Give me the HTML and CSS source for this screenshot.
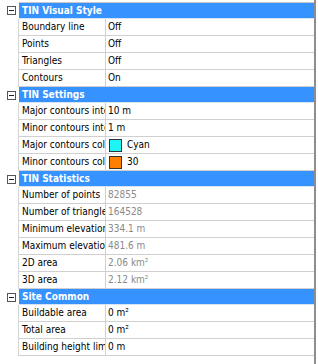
FILE: index.html
```html
<!DOCTYPE html>
<html lang="en">
<head>
  <meta charset="UTF-8">
  <title>TIN Properties</title>
  <link rel="stylesheet" href="styles.css">
</head>
<body>

<div class="panel">
  <div class="cat">
    <div class="gutter"><span class="toggle"></span></div>
    <div class="cat-title">TIN Visual Style</div>
  </div>
  <div class="row"><div class="gutter"></div><div class="name">Boundary line</div><div class="val">Off</div></div>
  <div class="row"><div class="gutter"></div><div class="name">Points</div><div class="val">Off</div></div>
  <div class="row"><div class="gutter"></div><div class="name">Triangles</div><div class="val">Off</div></div>
  <div class="row"><div class="gutter"></div><div class="name">Contours</div><div class="val">On</div></div>

  <div class="cat">
    <div class="gutter"><span class="toggle"></span></div>
    <div class="cat-title">TIN Settings</div>
  </div>
  <div class="row"><div class="gutter"></div><div class="name">Major contours interval</div><div class="val">10 m</div></div>
  <div class="row"><div class="gutter"></div><div class="name">Minor contours interval</div><div class="val">1 m</div></div>
  <div class="row"><div class="gutter"></div><div class="name">Major contours color</div><div class="val"><span class="swatch cyan"></span>Cyan</div></div>
  <div class="row"><div class="gutter"></div><div class="name">Minor contours color</div><div class="val"><span class="swatch orange"></span>30</div></div>

  <div class="cat">
    <div class="gutter"><span class="toggle"></span></div>
    <div class="cat-title">TIN Statistics</div>
  </div>
  <div class="row"><div class="gutter"></div><div class="name">Number of points</div><div class="val ro">82855</div></div>
  <div class="row"><div class="gutter"></div><div class="name">Number of triangles</div><div class="val ro">164528</div></div>
  <div class="row"><div class="gutter"></div><div class="name">Minimum elevation</div><div class="val ro">334.1 m</div></div>
  <div class="row"><div class="gutter"></div><div class="name">Maximum elevation</div><div class="val ro">481.6 m</div></div>
  <div class="row"><div class="gutter"></div><div class="name">2D area</div><div class="val ro">2.06 km²</div></div>
  <div class="row"><div class="gutter"></div><div class="name">3D area</div><div class="val ro">2.12 km²</div></div>

  <div class="cat">
    <div class="gutter"><span class="toggle"></span></div>
    <div class="cat-title">Site Common</div>
  </div>
  <div class="row"><div class="gutter"></div><div class="name">Buildable area</div><div class="val">0 m²</div></div>
  <div class="row"><div class="gutter"></div><div class="name">Total area</div><div class="val">0 m²</div></div>
  <div class="row"><div class="gutter"></div><div class="name">Building height limit</div><div class="val">0 m</div></div>
</div>

</body>
</html>
```

FILE: styles.css
```css
body {
  margin: 0;
  background: #fff;
  font-family: "DejaVu Sans Condensed", "Liberation Sans", sans-serif;
  font-size: 10px;
  color: #000;
}
.panel {
  width: 316px;
  height: 364px;
  padding-top: 2px;
  border-right: 2px solid #8e8e8e;
  box-sizing: border-box;
}
.cat,
.row {
  display: flex;
}
.gutter {
  width: 19px;
  flex: none;
  display: flex;
  align-items: center;
  justify-content: center;
}
.cat:first-child .cat-title {
  border-top: 1px solid #c8c8c8;
}
.cat-title {
  flex: 1;
  height: 15px;
  line-height: 15px;
  padding-left: 3px;
  background: #3592fe;
  color: #fff;
  font-weight: bold;
  border-bottom: 1px solid #d6e3f2;
}
.toggle {
  width: 9px;
  height: 9px;
  box-sizing: border-box;
  border: 1px solid #555;
  margin-left: 3px;
  display: flex;
  align-items: center;
  justify-content: center;
}
.toggle::before {
  content: "";
  width: 5px;
  height: 1px;
  background: #222;
}
.row .gutter {
  border-right: 1px solid #d4d4d4;
  width: 18px;
}
.name,
.val {
  height: 16px;
  line-height: 16px;
  border-bottom: 1px solid #d0d0d0;
  white-space: nowrap;
  overflow: hidden;
}
.name {
  width: 83px;
  flex: none;
  padding-left: 3px;
  border-right: 1px solid #d0d0d0;
}
.val {
  flex: 1;
  padding-left: 2px;
  display: flex;
  align-items: center;
}
.val.ro {
  color: #8a8a8a;
}
.swatch {
  width: 11px;
  height: 11px;
  border: 1px solid #333;
  margin: 0 5px 0 1px;
  flex: none;
}
.swatch.cyan {
  background: #1ef4f4;
}
.swatch.orange {
  background: #ff8000;
}
```
